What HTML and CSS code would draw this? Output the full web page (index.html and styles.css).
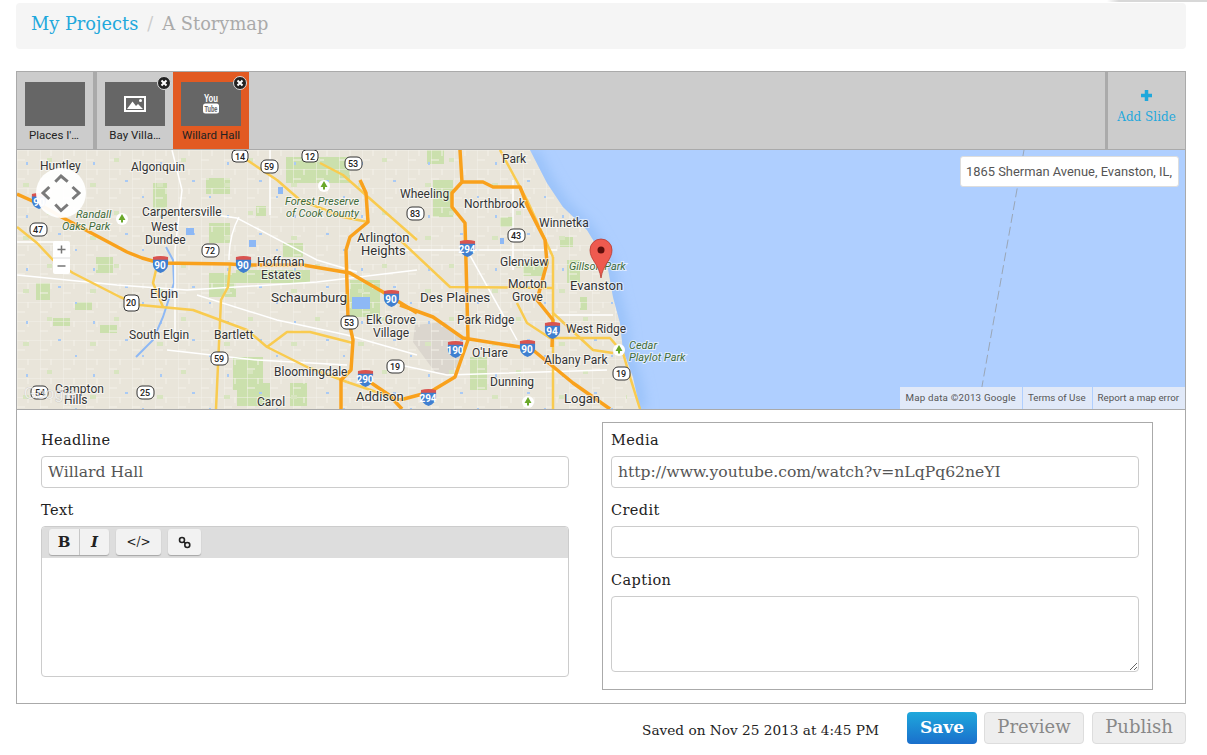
FILE: index.html
```html
<!DOCTYPE html>
<html lang="en">
<head>
  <meta charset="UTF-8">
  <meta name="viewport" content="width=device-width, initial-scale=1.0">
  <title>A Storymap</title>
  <link rel="stylesheet" href="styles.css">
</head>
<body>
  <div class="top-edge"></div>

  <ul class="breadcrumb">
    <li><a href="#">My Projects</a></li>
    <li class="divider">/</li>
    <li class="current">A Storymap</li>
  </ul>

  <div class="editor">
    <!-- slide strip -->
    <div class="slides">
      <div class="slide">
        <div class="thumb"></div>
        <div class="slide-name">Places I'…</div>
      </div>
      <div class="slide">
        <div class="thumb">
          <svg width="22" height="16" viewBox="0 0 22 16">
            <rect x="1" y="1" width="20" height="14" fill="none" stroke="#fff" stroke-width="2"/>
            <circle cx="16.500" cy="4.500" r="1.500" fill="#fff"/>
            <path d="M3 13 L8.500 5.500 L12 10 L14 8 L19 13 Z" fill="#fff"/>
          </svg>
        </div>
        <div class="slide-name">Bay Villa…</div>
        <span class="remove"><svg width="8" height="8" viewBox="0 0 8 8"><path d="M1.500 1.500 L6.500 6.500 M6.500 1.500 L1.500 6.500" stroke="#fff" stroke-width="2"/></svg></span>
      </div>
      <div class="slide active">
        <div class="thumb">
          <svg width="18" height="20" viewBox="0 0 18 20">
            <text x="9" y="8" class="yt-you" text-anchor="middle" textLength="14" lengthAdjust="spacingAndGlyphs">You</text>
            <rect x="1" y="9.500" width="16" height="10" rx="2.500" fill="#fff"/>
            <text x="9" y="17.500" class="yt-tube" text-anchor="middle" textLength="13" lengthAdjust="spacingAndGlyphs">Tube</text>
          </svg>
        </div>
        <div class="slide-name">Willard Hall</div>
        <span class="remove"><svg width="8" height="8" viewBox="0 0 8 8"><path d="M1.500 1.500 L6.500 6.500 M6.500 1.500 L1.500 6.500" stroke="#fff" stroke-width="2"/></svg></span>
      </div>
      <a class="add-slide" href="#">
        <svg width="13" height="13" viewBox="0 0 13 13"><path d="M6.500 1 V12 M1 6.500 H12" stroke="#1fa8dc" stroke-width="3.500"/></svg>
        <span>Add Slide</span>
      </a>
    </div>

    <!-- map -->
    <div class="map">
      <svg class="map-art" width="1168" height="259" viewBox="0 0 1168 259">
        <defs>
          <pattern id="streets" width="23" height="19" patternUnits="userSpaceOnUse">
            <path d="M0 0 H23 M0 0 V19 M11 0 V6 M0 10 H8" stroke="#f4f1e9" stroke-width="1" fill="none"/>
          </pattern>
          <pattern id="ponds" width="67" height="53" patternUnits="userSpaceOnUse">
            <path d="M9 12 h2 v3 h-2z M41 30 h3 v2 h-3z M58 46 h2 v2 h-2z" fill="#a9caf5"/>
            <path d="M30 8 h5 v4 h-5z M6 33 h6 v4 h-6z" fill="#d8e5c0"/>
          </pattern>
          <filter id="soft" x="-20%" y="-20%" width="140%" height="140%"><feGaussianBlur stdDeviation="7"/></filter>
          <clipPath id="lake-clip">
            <path d="M513 0 L530 33 L546 57 L570 80 L590 113 L596 147 L603 173 L606 200 L616 227 L623 259 H1168 V0 Z"/>
          </clipPath>
          <symbol id="iso" viewBox="0 0 18 18" overflow="visible">
            <path d="M1 1 Q9 -1 17 1 L17 5 L1 5 Z" fill="#d9534f"/>
            <path d="M1 4 H17 V9 Q17 15 9 18 Q1 15 1 9 Z" fill="#3f7fd0"/>
          </symbol>
        </defs>

        <rect width="1168" height="259" fill="#e9e5da"/>

        <!-- parks -->
        <g fill="#cbe0ad">
          <path d="M189 28 h24 v16 h-24z"/><path d="M239 56 h10 v10 h-10z"/><path d="M192 73 h21 v20 h-21z"/>
          <path d="M192 123 h27 v24 h-27z"/><path d="M219 120 h74 v13 h-74z"/><path d="M266 93 h20 v14 h-20z"/>
          <path d="M136 33 h14 v27 h-14z"/><path d="M79 107 h17 v16 h-17z"/><path d="M19 133 h14 v17 h-14z"/>
          <path d="M58 152 h17 v8 h-17z"/><path d="M83 175 h17 v8 h-17z"/><path d="M36 168 h17 v8 h-17z"/>
          <path d="M333 130 h30 v37 h-30z"/><path d="M269 7 h64 v26 h-64z"/><path d="M216 207 h30 v33 h-30z"/>
          <path d="M273 233 h17 v23 h-17z"/><path d="M220 233 h33 v23 h-33z"/>
          <path d="M416 30 h20 v37 h-20z"/><path d="M506 113 h20 v13 h-20z"/><path d="M543 87 h13 v10 h-13z"/>
          <path d="M453 207 h17 v33 h-17z"/><path d="M483 67 h13 v10 h-13z"/><path d="M563 147 h7 v13 h-7z"/>
          <path d="M410 0 h17 v14 h-17z"/><path d="M550 110 h13 v23 h-13z"/>
        </g>
        <path d="M398 175 l30 -3 l18 18 l-6 36 l-22 -4 l-22 -30z" fill="#dbd6ce"/>
        <rect width="1168" height="259" fill="url(#streets)"/>
        <rect width="610" height="259" fill="url(#ponds)"/>
        <g fill="#8db8f5">
          <path d="M169 78 h8 v7 h-8z"/><path d="M232 90 h7 v7 h-7z"/><path d="M261 37 h5 v7 h-5z"/>
          <path d="M335 147 h18 v12 h-18z"/><path d="M483 88 h4 v6 h-4z"/>
        </g>

        <!-- lake -->
        <path d="M513 0 L530 33 L546 57 L570 80 L590 113 L596 147 L603 173 L606 200 L616 227 L623 259 H1168 V0 Z" fill="#afcfff"/>
        <g clip-path="url(#lake-clip)">
          <path d="M513 0 L530 33 L546 57 L570 80 L590 113 L596 147 L603 173 L606 200 L616 227 L623 259" stroke="#8ebbf6" stroke-width="10" fill="none" filter="url(#soft)"/>
        </g>
        <path d="M1007 0 L961 259" stroke="#9aa6b6" stroke-width="1" stroke-dasharray="9 4" fill="none"/>

        <!-- river -->
        <path d="M149 97 L156 110 L157 133 L146 167 L136 190 L119 207" stroke="#8db8f5" stroke-width="2" fill="none"/>

        <!-- white roads -->
        <g stroke="#fff" stroke-width="1.500" fill="none">
          <path d="M0 125 L100 135 L170 140 L300 132 L400 120"/>
          <path d="M160 60 L220 68 L300 110 L340 122"/>
          <path d="M222 67 Q212 85 212 110"/>
          <path d="M253 0 V65"/>
          <path d="M155 0 L165 40 L158 100 L158 190"/>
          <path d="M180 145 L260 170 L330 185 L400 205"/>
          <path d="M150 200 L240 210 L330 215"/>
          <path d="M0 92 L40 92"/>
          <path d="M450 100 L500 190"/>
          <path d="M383 100 L450 100 L540 100"/>
          <path d="M383 215 L430 225 L590 220"/>
          <path d="M496 30 V120"/>
          <path d="M530 165 H596"/>
        </g>

        <!-- arterials -->
        <g stroke="#f9cb4f" stroke-width="2.500" fill="none" stroke-linejoin="round">
          <path d="M0 77 L20 93 L36 110 L56 123 L103 147 L123 155 L176 160 L230 180 L250 197 L290 217 L330 232"/>
          <path d="M213 115 L211 137 L204 150 L199 259"/>
          <path d="M250 197 L270 182 L293 182 L336 193"/>
          <path d="M230 10 L260 30 L283 50 L326 67 L351 72"/>
          <path d="M303 13 L326 25 L400 90"/>
          <path d="M383 90 L433 137 L536 138"/>
          <path d="M536 107 V259"/>
          <path d="M483 0 L510 50 L536 107"/>
          <path d="M500 153 L510 173 L533 188 L593 188 L606 203 L613 227 L623 259"/>
          <path d="M536 163 L576 200 L596 203"/>
          <path d="M139 120 L136 133 L146 157"/>
          <path d="M330 232 L383 250"/>
        </g>

        <!-- highways -->
        <g stroke="#f9a11c" stroke-width="3.500" fill="none" stroke-linejoin="round">
          <path d="M0 44 L20 53 L50 70 L110 102 L125 108 L143 113 L213 114 L226 115 L286 115 L333 123 L366 142 L400 163"/>
          <path d="M383 155 L416 167 L446 188 L503 197 L516 200 L556 233 L593 259"/>
          <path d="M343 30 L349 43 L351 72 L333 87 L329 100 L331 167 L336 190 L334 220 L324 230 V259"/>
          <path d="M443 0 L445 32 L435 43 L435 57 L448 73 L450 150 L451 190 L438 227 L413 242 L383 250"/>
          <path d="M445 32 L466 32 L476 37 L503 37 L511 57 L528 90 L530 113 L520 150 L536 170 L535 197"/>
          <path d="M350 230 L372 245 L385 259"/>
        </g>

        <!-- interstate shields -->
        <g class="shield-num" text-anchor="middle">
          <use href="#iso" x="14" y="43" width="16" height="16"/><text x="22" y="56">90</text>
          <use href="#iso" x="135" y="106" width="17" height="17"/><text x="143" y="119">90</text>
          <use href="#iso" x="218" y="106" width="17" height="17"/><text x="226" y="119">90</text>
          <use href="#iso" x="366" y="140" width="17" height="17"/><text x="374" y="153">90</text>
          <use href="#iso" x="338" y="220" width="21" height="17"/><text x="348" y="233">290</text>
          <use href="#iso" x="440" y="90" width="21" height="17"/><text x="450" y="103">294</text>
          <use href="#iso" x="428" y="191" width="21" height="17"/><text x="438" y="204">190</text>
          <use href="#iso" x="502" y="190" width="17" height="17"/><text x="510" y="203">90</text>
          <use href="#iso" x="527" y="172" width="17" height="17"/><text x="535" y="185">94</text>
          <use href="#iso" x="401" y="239" width="21" height="17"/><text x="411" y="252">294</text>
        </g>

        <!-- route shields -->
        <g class="route">
          <rect x="215" y="0" width="16" height="12" rx="4"/><rect x="285" y="0" width="16" height="12" rx="4"/>
          <rect x="244" y="10" width="17" height="13" rx="5"/><rect x="328" y="7" width="17" height="13" rx="5"/>
          <rect x="13" y="73" width="17" height="13" rx="5"/><rect x="185" y="94" width="17" height="13" rx="5"/>
          <rect x="107" y="145" width="15" height="16" rx="4"/><rect x="324" y="166" width="17" height="13" rx="5"/>
          <rect x="194" y="202" width="17" height="13" rx="5"/><rect x="370" y="210" width="17" height="13" rx="5"/>
          <rect x="120" y="236" width="17" height="13" rx="5"/><rect x="14" y="236" width="17" height="13" rx="5"/>
          <rect x="491" y="79" width="17" height="13" rx="5"/><rect x="390" y="57" width="17" height="13" rx="5"/>
          <rect x="596" y="217" width="17" height="13" rx="5"/>
        </g>
        <g class="route-num" text-anchor="middle">
          <text x="223" y="10">14</text><text x="293" y="10">12</text><text x="252" y="20">59</text><text x="336" y="17">53</text>
          <text x="21" y="83">47</text><text x="193" y="104">72</text><text x="114" y="156">20</text><text x="332" y="176">53</text>
          <text x="202" y="212">59</text><text x="378" y="220">19</text><text x="128" y="246">25</text><text x="23" y="246">54</text>
          <text x="499" y="89">43</text><text x="398" y="67">83</text><text x="604" y="227">19</text>
        </g>

        <!-- park markers -->
        <g>
          <circle cx="105" cy="69" r="6" fill="#fff"/><path d="M105 64 L108.500 70 H106 V72.500 H104 V70 H101.500Z" fill="#6aa82a"/>
          <circle cx="307" cy="36" r="6" fill="#fff"/><path d="M307 31 L310.500 37 H308 V39.500 H306 V37 H303.500Z" fill="#6aa82a"/>
          <circle cx="602" cy="200" r="6" fill="#fff"/><path d="M602 195 L605.500 201 H603 V203.500 H601 V201 H598.500Z" fill="#6aa82a"/>
          <circle cx="511" cy="252" r="6" fill="#fff"/><path d="M511 247 L514.500 253 H512 V255.500 H510 V253 H507.500Z" fill="#6aa82a"/>
        </g>

        <!-- place labels -->
        <g class="place">
          <text x="23" y="20">Huntley</text><text x="114" y="21">Algonquin</text><text x="125" y="66">Carpentersville</text>
          <text x="134" y="81">West</text><text x="128" y="94">Dundee</text><text x="240" y="116">Hoffman</text>
          <text x="244" y="129">Estates</text><text x="133" y="148" class="mid">Elgin</text><text x="112" y="189">South Elgin</text>
          <text x="197" y="189">Bartlett</text><text x="257" y="226">Bloomingdale</text><text x="38" y="243">Campton</text>
          <text x="47" y="254">Hills</text><text x="240" y="256">Carol</text>
          <text x="254" y="152" class="big">Schaumburg</text><text x="340" y="92" class="mid">Arlington</text>
          <text x="344" y="105" class="mid">Heights</text><text x="349" y="174">Elk Grove</text><text x="356" y="187">Village</text>
          <text x="339" y="251" class="mid">Addison</text><text x="383" y="48">Wheeling</text>
          <text x="447" y="58">Northbrook</text><text x="522" y="77">Winnetka</text><text x="483" y="116">Glenview</text>
          <text x="491" y="138">Morton</text><text x="495" y="151">Grove</text><text x="403" y="152" class="big">Des Plaines</text>
          <text x="440" y="174">Park Ridge</text><text x="549" y="183">West Ridge</text><text x="455" y="207">O'Hare</text>
          <text x="527" y="214">Albany Park</text><text x="473" y="236">Dunning</text><text x="547" y="253" class="mid">Logan</text>
          <text x="553" y="140" class="mid">Evanston</text><text x="485" y="13">Park</text>
        </g>
        <g class="park-name">
          <text x="59" y="68">Randall</text><text x="45" y="80">Oaks Park</text>
          <text x="268" y="55">Forest Preserve</text><text x="269" y="67">of Cook County</text>
          <text x="552" y="120">Gillson Park</text><text x="612" y="199">Cedar</text><text x="612" y="211">Playlot Park</text>
        </g>
        <text x="7" y="249" class="google">Google</text>

        <!-- pin -->
        <path d="M584 128 C582 114 573 110 573 100 A10.500 10.500 0 0 1 595 100 C595 110 586 114 584 128Z" fill="#ee5a4f" stroke="#b83a30" stroke-width=".8"/>
        <circle cx="584" cy="100" r="3.500" fill="#5e0f0c"/>

        <!-- pan control -->
        <circle cx="44" cy="43" r="25" fill="#fff" opacity=".95"/>
        <path d="M38.300 31.700 L44 26 L50.700 31.700 M32.300 37 L26 43 L32.300 49 M55.500 37 L62 43 L55.500 49 M38.300 54.500 L44 60.500 L50.700 54.500" stroke="#7a7a7a" stroke-width="3" fill="none"/>

        <!-- zoom control -->
        <rect x="36" y="91" width="17" height="33" rx="2" fill="#fff"/>
        <path d="M36 108 H53" stroke="#ddd"/>
        <path d="M44.500 95.500 V103.500 M40.500 99.500 H48.500 M40.500 116 H48.500" stroke="#777" stroke-width="1.500"/>
      </svg>

      <input class="map-search" type="text" value="1865 Sherman Avenue, Evanston, IL,">

      <div class="map-credits">
        <span class="credit-data">Map data ©2013 Google</span>
        <span>Terms of Use</span>
        <span>Report a map error</span>
      </div>
    </div>

    <!-- slide form -->
    <div class="slide-form">
      <div class="col-text">
        <label>Headline</label>
        <input class="field" type="text" value="Willard Hall">
        <label>Text</label>
        <div class="rich-text">
          <div class="rich-toolbar">
            <div class="btn-group">
              <button class="tool tool-b">B</button>
              <button class="tool tool-i">I</button>
            </div>
            <button class="tool tool-code">&lt;/&gt;</button>
            <button class="tool tool-link">
              <svg width="13" height="13" viewBox="0 0 13 13" fill="none" stroke="#222" stroke-width="1.600"><circle cx="4" cy="4" r="2.500"/><circle cx="9.300" cy="9" r="2.500"/><path d="M5.800 5.800 L7.500 7.300"/></svg>
            </button>
          </div>
          <div class="rich-body"></div>
        </div>
      </div>

      <div class="col-media">
        <label>Media</label>
        <input class="field" type="text" value="http://www.youtube.com/watch?v=nLqPq62neYI">
        <label>Credit</label>
        <input class="field" type="text">
        <label>Caption</label>
        <textarea class="field caption"></textarea>
      </div>
    </div>
  </div>

  <div class="actions">
    <span class="saved">Saved on Nov 25 2013 at 4:45 PM</span>
    <button class="btn btn-save">Save</button>
    <button class="btn btn-preview">Preview</button>
    <button class="btn btn-publish">Publish</button>
  </div>
</body>
</html>
```

FILE: styles.css
```css
body {
  margin: 0;
  padding: 0 21px 0 16px;
  background: #fff;
  color: #222;
  font-family: "DejaVu Serif", serif;
  font-size: 13px;
  height: 755px;
  box-sizing: border-box;
  overflow: hidden;
  position: relative;
}
.top-edge {
  position: absolute;
  top: 0;
  right: 0;
  width: 100px;
  height: 2px;
  background: linear-gradient(to right, #fff, #d8d8d8 12%);
}
.breadcrumb {
  list-style: none;
  margin: 3px 0 0;
  padding: 0 15px 5px;
  height: 46px;
  display: flex;
  align-items: center;
  gap: 9px;
  background: #f5f5f5;
  border-radius: 4px;
  font-size: 17.800px;
  box-sizing: border-box;
}
.breadcrumb a {
  color: #1fa8dc;
  text-decoration: none;
}
.divider {
  color: #ccc;
}
.current {
  color: #aaa;
}
.editor {
  margin-top: 22px;
  height: 633px;
  border: 1px solid #aaa;
  box-sizing: border-box;
}

/* slides */
.slides {
  display: flex;
  height: 78px;
  background: #ccc;
  border-bottom: 1px solid #aaa;
  box-sizing: border-box;
}
.slide {
  width: 76px;
  position: relative;
  box-sizing: border-box;
  padding-top: 10px;
  text-align: center;
}
.slide:first-child {
  border-right: 4px solid #aaa;
  width: 80px;
}
.slide.active {
  background: #e25a22;
}
.thumb {
  width: 60px;
  height: 44px;
  margin: 0 auto;
  background: #666;
  display: flex;
  align-items: center;
  justify-content: center;
}
.thumb svg {
  overflow: visible;
}
.slide:first-child .thumb {
  margin-left: 8px;
}
.slide-name {
  font-family: Roboto, sans-serif;
  font-size: 11.500px;
  line-height: 12px;
  margin-top: 2px;
  padding-top: 1px;
  color: #222;
  white-space: nowrap;
}
.slide:first-child .slide-name {
  width: 74px;
}
.remove {
  position: absolute;
  top: 4px;
  right: 2px;
  width: 12px;
  height: 12px;
  border-radius: 50%;
  background: #222;
  border: 1px solid #ddd;
  display: flex;
  align-items: center;
  justify-content: center;
}
.yt-you {
  font-family: "Liberation Sans", sans-serif;
  font-size: 10px;
  font-weight: bold;
  fill: #fff;
}
.yt-tube {
  font-family: "Liberation Sans", sans-serif;
  font-size: 8.500px;
  font-weight: bold;
  fill: #666;
}
.add-slide {
  margin-left: auto;
  width: 80px;
  border-left: 3px solid #aaa;
  box-sizing: border-box;
  color: #1fa8dc;
  text-decoration: none;
  display: flex;
  flex-direction: column;
  align-items: center;
  padding-top: 17px;
  gap: 8px;
  font-size: 12px;
}

/* map */
.map {
  position: relative;
  height: 260px;
  border-bottom: 1px solid #aaa;
  box-sizing: border-box;
  overflow: hidden;
}
.map-art {
  display: block;
}
.map-art text {
  paint-order: stroke;
  stroke: #fff;
  stroke-width: 2px;
  stroke-opacity: .6;
}
.place {
  font-family: Roboto, sans-serif;
  font-size: 12px;
  fill: #333;
}
.place .mid {
  font-size: 13px;
}
.place .big {
  font-size: 13.500px;
}
.park-name {
  font-family: Roboto, sans-serif;
  font-size: 11px;
  font-style: italic;
  fill: #3f6b3a;
}
.route rect {
  fill: #fff;
  stroke: #333;
  stroke-width: 1;
}
.route-num {
  font-family: Roboto, sans-serif;
  font-size: 9px;
  font-weight: 500;
  fill: #222;
}
.map-art .route-num text {
  stroke: none;
}
.shield-num {
  font-family: Roboto, sans-serif;
  font-size: 10px;
  font-weight: 700;
  fill: #fff;
}
.map-art .shield-num text {
  stroke: none;
}
.map-art .google {
  font-family: "Liberation Sans", sans-serif;
  font-size: 16px;
  fill: #fff;
  fill-opacity: .6;
  stroke: #999;
  stroke-width: .5px;
}
.map-search {
  position: absolute;
  top: 6px;
  right: 6px;
  width: 219px;
  height: 31px;
  box-sizing: border-box;
  border: 1px solid #ddd;
  border-radius: 3px;
  padding: 0 5px;
  font-family: Roboto, sans-serif;
  font-size: 12.900px;
  color: #555;
  background: #fff;
}
.map-credits {
  position: absolute;
  right: 0;
  bottom: 0;
  height: 22px;
  display: flex;
  gap: 1px;
  font-family: Roboto, sans-serif;
  font-size: 9.750px;
  color: #555;
}
.map-credits span {
  background: #e1e9f8;
  line-height: 22px;
  padding: 0 6px 0 5px;
}
.map-credits .credit-data {
  letter-spacing: .2px;
}

/* form */
.slide-form {
  display: flex;
  padding: 12px 32px 0 24px;
  justify-content: space-between;
}
.col-text {
  width: 528px;
  padding-top: 10px;
}
.col-media {
  width: 551px;
  height: 268px;
  box-sizing: border-box;
  border: 1px solid #aaa;
  padding: 9px 13px 0 8px;
}
label {
  display: block;
  font-size: 14.500px;
  letter-spacing: .4px;
  line-height: 16px;
  margin: 0 0 8px;
  color: #222;
}
.field {
  display: block;
  width: 100%;
  height: 32px;
  box-sizing: border-box;
  border: 1px solid #ccc;
  border-radius: 4px;
  padding: 0 6px;
  margin-bottom: 14px;
  font-family: "DejaVu Serif", serif;
  font-size: 15.600px;
  color: #555;
  background: #fff;
}
.caption {
  height: 76px;
  margin-bottom: 0;
}
.rich-text {
  border: 1px solid #ccc;
  border-radius: 4px;
  height: 151px;
  box-sizing: border-box;
  overflow: hidden;
}
.rich-toolbar {
  height: 31px;
  background: #ddd;
  display: flex;
  align-items: flex-start;
  gap: 7px;
  padding: 2px 0 0 7px;
  box-sizing: border-box;
}
.btn-group {
  display: flex;
}
.tool {
  height: 26px;
  border: 0;
  border-radius: 3px;
  background: #f2f2f2;
  box-shadow: 0 1px 1px rgba(0,0,0,.25);
  font-family: "DejaVu Serif", serif;
  color: #222;
  padding: 0;
  display: flex;
  align-items: center;
  justify-content: center;
}
.tool-b {
  width: 31px;
  font-weight: bold;
  font-size: 15px;
  border-radius: 3px 0 0 3px;
  border-right: 1px solid #ccc;
}
.tool-i {
  width: 29px;
  font-style: italic;
  font-weight: bold;
  font-size: 15px;
  border-radius: 0 3px 3px 0;
}
.tool-code {
  width: 45px;
  font-size: 12px;
}
.tool-link {
  width: 33px;
}

/* footer */
.actions {
  display: flex;
  justify-content: flex-end;
  align-items: flex-start;
  margin-top: 8px;
}
.saved {
  font-size: 13.670px;
  margin: 10px 28px 0 0;
}
.btn {
  height: 32px;
  border-radius: 4px;
  border: 1px solid #ddd;
  background: #eee;
  color: #888;
  font-family: "DejaVu Serif", serif;
  font-size: 18px;
  padding: 0 0 3px;
}
.btn-save {
  width: 70px;
  border: 0;
  font-size: 17px;
  font-weight: bold;
  color: #fff;
  background: linear-gradient(#1fa8dc, #1a6fcc);
}
.btn-preview {
  width: 100px;
  margin-left: 7px;
}
.btn-publish {
  width: 94px;
  margin-left: 8px;
}
```
